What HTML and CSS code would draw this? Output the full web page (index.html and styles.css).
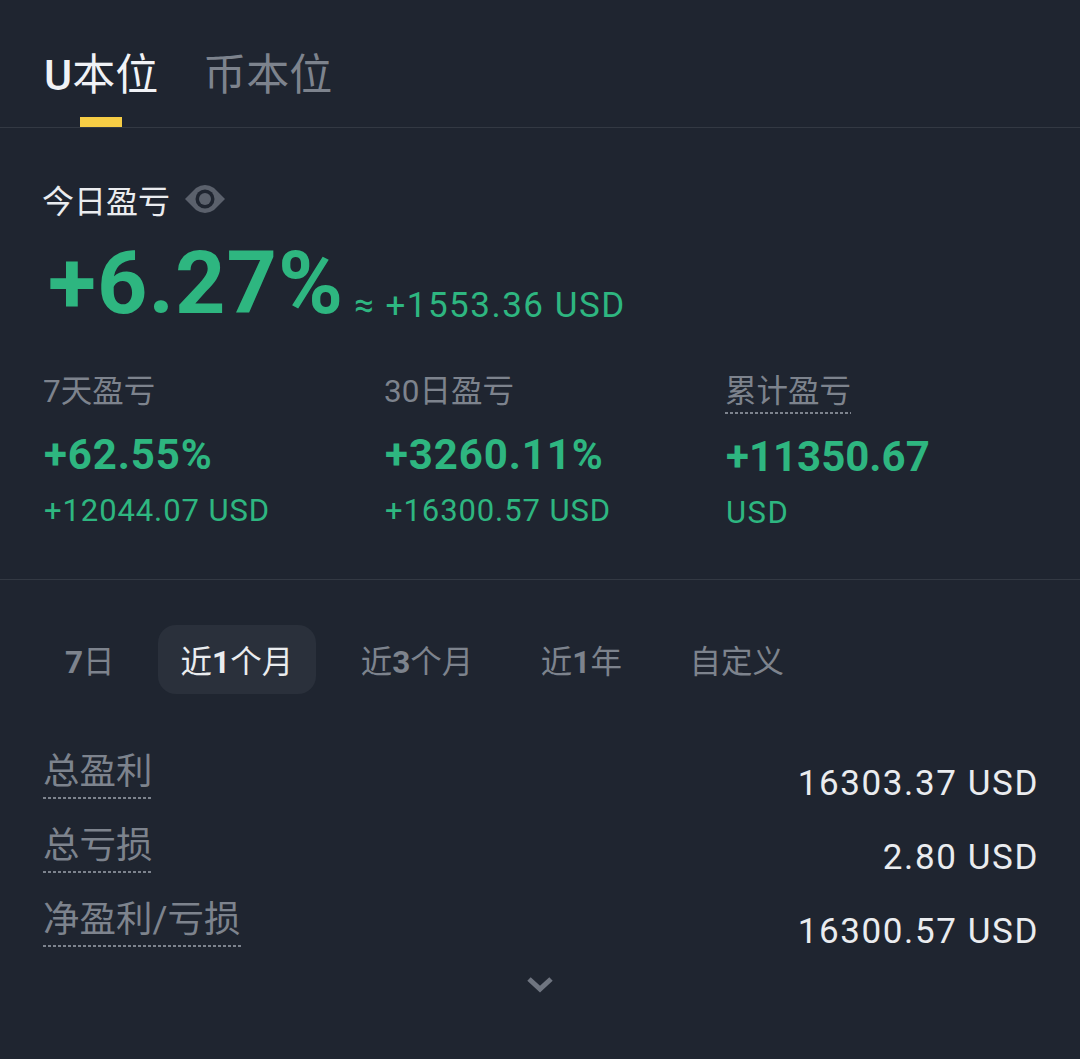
FILE: index.html
```html
<!DOCTYPE html>
<html lang="zh-CN">
<head>
    <meta charset="UTF-8">
    <title>盈亏</title>
    <link rel="stylesheet" href="styles.css">
</head>
<body>
    <div class="tabs">
        <div class="tab active"><span class="tab-letter">U</span>本位</div>
        <div class="tab">币本位</div>
    </div>

    <div class="summary">
        <div class="today-label">
            <span>今日盈亏</span>
            <svg class="eye" width="42" height="32" viewBox="0 0 42 32">
                <path d="M1 16 L12 5 Q21 -1 30 5 L41 16 L30 27 Q21 33 12 27 Z" fill="#5b616c"/>
                <circle cx="21" cy="16" r="9.5" fill="#1f2530"/>
                <circle cx="21" cy="16" r="6" fill="#5b616c"/>
            </svg>
        </div>
        <div class="today-value">
            <span class="big">+6.27%</span>
            <span class="approx">≈ +1553.36 USD</span>
        </div>
        <div class="stats">
            <div class="stat">
                <div class="stat-label">7天盈亏</div>
                <div class="stat-pct">+62.55%</div>
                <div class="stat-usd">+12044.07 USD</div>
            </div>
            <div class="stat">
                <div class="stat-label">30日盈亏</div>
                <div class="stat-pct">+3260.11%</div>
                <div class="stat-usd">+16300.57 USD</div>
            </div>
            <div class="stat total">
                <div class="stat-label"><span class="dotted">累计盈亏</span></div>
                <div class="stat-pct">+11350.67</div>
                <div class="stat-usd">USD</div>
            </div>
        </div>
    </div>

    <div class="periods">
        <div class="period"><b>7</b>日</div>
        <div class="period active">近<b>1</b>个月</div>
        <div class="period">近<b>3</b>个月</div>
        <div class="period">近<b>1</b>年</div>
        <div class="period">自定义</div>
    </div>

    <div class="rows">
        <div class="row"><span class="row-label dotted">总盈利</span><span class="row-value">16303.37 USD</span></div>
        <div class="row"><span class="row-label dotted">总亏损</span><span class="row-value">2.80 USD</span></div>
        <div class="row"><span class="row-label dotted">净盈利/亏损</span><span class="row-value">16300.57 USD</span></div>
    </div>

    <div class="more">
        <svg width="28" height="18" viewBox="0 0 28 18">
            <path d="M3 4 L14 14 L25 4" fill="none" stroke="#6f7580" stroke-width="5"/>
        </svg>
    </div>
</body>
</html>
```

FILE: styles.css
```css
body {
    margin: 0;
    height: 1059px;
    overflow: hidden;
    background-color: #1f2530;
    font-family: Roboto, "Noto Sans CJK SC", sans-serif;
    color: #eaecef;
}
.tabs {
    display: flex;
    gap: 45px;
    height: 127px;
    padding-left: 44px;
    border-bottom: 1px solid #333943;
}
.tab {
    position: relative;
    padding-top: 47px;
    font-size: 43px;
    line-height: 56px;
    color: #7d838d;
}
.tab.active {
    color: #f0f2f6;
}
.tab-letter {
    font-weight: 500;
}
.tab.active::after {
    content: "";
    position: absolute;
    left: 36px;
    bottom: 0;
    width: 42px;
    height: 10px;
    background-color: #f6cd45;
}
.summary {
    height: 452px;
    padding: 51px 44px 0;
    box-sizing: border-box;
    border-bottom: 1px solid #333943;
}
.today-label {
    display: flex;
    align-items: center;
    gap: 14px;
    height: 40px;
    margin-left: -2px;
    font-size: 32px;
    color: #eaecef;
}
.today-value {
    display: flex;
    align-items: flex-end;
    gap: 10px;
    height: 100px;
    margin-top: 14px;
    padding-left: 4px;
    color: #2eb680;
}
.big {
    font-size: 88px;
    line-height: 100px;
    font-weight: 700;
    letter-spacing: 1px;
}
.approx {
    margin-bottom: 2px;
    font-size: 35px;
    line-height: 50px;
    letter-spacing: 1.5px;
}
.stats {
    display: flex;
    margin-top: 37px;
}
.stat {
    flex: none;
    width: 341px;
    color: #2eb680;
}
.stat-label {
    height: 44px;
    margin-left: -1px;
    font-size: 31.5px;
    line-height: 44px;
    color: #7d838d;
}
.dotted {
    display: inline-block;
    background: repeating-linear-gradient(90deg, #7d838d 0 3px, transparent 3px 5px) left bottom / 100% 2px no-repeat;
}
.stat-pct {
    margin-top: 16px;
    font-size: 42px;
    line-height: 50px;
    font-weight: 700;
    letter-spacing: .9px;
}
.stat-usd {
    margin-top: 9px;
    font-size: 31px;
    line-height: 44px;
    letter-spacing: .9px;
}
.total .stat-pct {
    margin-top: 18px;
    letter-spacing: 0;
}
.total .stat-usd {
    letter-spacing: 1.5px;
}
.total .dotted {
    height: 44px;
}
.periods {
    display: flex;
    align-items: center;
    gap: 21.5px;
    margin-top: 45px;
    padding-left: 42px;
}
.period {
    padding: 7px 23px 0;
    height: 62px;
    line-height: 62px;
    font-size: 31.5px;
    color: #7d838d;
    border-radius: 18px;
}
.period:first-child {
    padding-right: 21.5px;
}
.period.active {
    background-color: #2a303b;
    color: #eaecef;
}
.rows {
    margin-top: 53px;
    padding: 0 41px 0 43px;
}
.row {
    display: flex;
    justify-content: space-between;
    align-items: flex-start;
    height: 74px;
}
.row-label {
    height: 52px;
    font-size: 36.5px;
    line-height: 50px;
    color: #7d838d;
}
.row-value {
    margin-top: 12px;
    font-size: 35px;
    line-height: 50px;
    letter-spacing: 1.6px;
    color: #eaecef;
}
.more {
    display: flex;
    justify-content: center;
    margin-top: 6px;
}
```
